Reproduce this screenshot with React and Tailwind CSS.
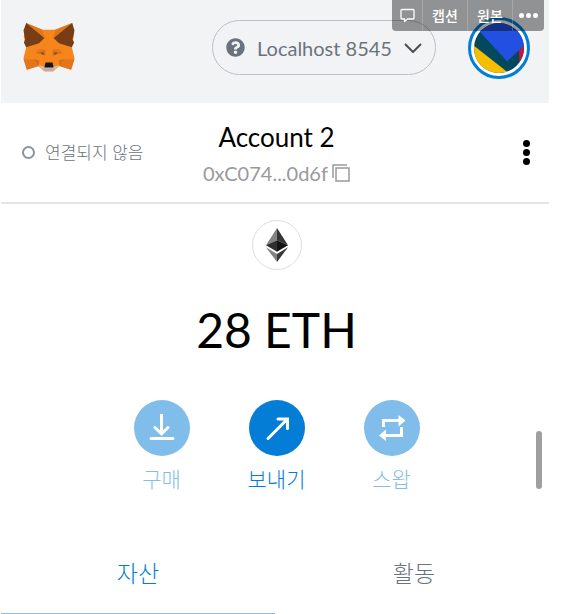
import { FaQuestionCircle } from "react-icons/fa";

function FoxLogo() {
  return (
    <svg className="h-[50px] w-[52px]" viewBox="71 67 153 148" role="img" aria-label="MetaMask">
      <path fill="#f6851b" d="M80 70 128 90H166L216 70 222 100 215 142 223 174 213 208 178 197 160 213H134L116 197 82 208 72 174 80 142 73 110Z" />
      <path fill="#e2761b" d="M80 70 128 90 134 112ZM216 70 166 90 161 112Z" />
      <path fill="#763d16" d="M80 70 134 114 118 130 80 142 73 128 77 119 72 92ZM216 70 161 114 177 130 215 142 222 128 217 119 223 92Z" />
      <path fill="#e2761b" d="M72 177H110L118 197 82 208ZM223 177H185L178 197 213 208Z" />
      <path fill="#d56a18" d="M104 177 119 181 116 196ZM191 177 176 181 179 196Z" />
      <path fill="#e4751f" d="M117 148H136L137 168 108 157ZM178 148H159L158 168 187 157Z" />
      <path fill="#d86c1a" d="M108 159 137 152 134 165ZM187 159 158 152 161 165Z" />
      <path fill="#5b4a3e" d="M123 157 131 158 133 164 126 162ZM172 157 164 158 162 164 169 162Z" />
      <path fill="#d7c1b3" d="M116 194 134 200H160L178 194 160 213H134Z" />
      <path fill="#c0ad9e" d="M128 204H167L160 213H134Z" />
      <path fill="#161616" d="M137 187H158L161 202H134Z" />
    </svg>
  );
}

function Jazzicon() {
  return (
    <svg className="size-[50px] rounded-full" viewBox="267 68 150 150" aria-hidden="true">
      <path fill="#03495e" d="M267 68H417V218H267Z" />
      <path fill="#2350e1" d="M260 68H417V136L366 183Z" />
      <path fill="#f5be00" d="M267 136 366 214V218H267Z" />
      <path fill="#c8143c" d="M402 150 417 136V190L403 184Z" />
    </svg>
  );
}

function EthLogo() {
  return (
    <svg className="h-[34px] w-[22px]" viewBox="0 0 66 102" role="img" aria-label="Ethereum">
      <path fill="#828384" d="M33 0V37L0 52Z" />
      <path fill="#343434" d="M33 0 66 52 33 37Z" />
      <path fill="#2f3030" d="M0 52 33 37V71Z" />
      <path fill="#141414" d="M66 52 33 37V71Z" />
      <path fill="#828384" d="M0 58 33 78V102Z" />
      <path fill="#393939" d="M66 58 33 78V102Z" />
    </svg>
  );
}

function DownIcon() {
  return (
    <svg className="size-7" viewBox="0 0 28 28" fill="none" stroke="currentColor" strokeWidth="3" strokeLinecap="round" aria-hidden="true">
      <path d="M13.5 1V19.500M7 13.500 13.5 20 20 13.500M3 24.500H25" />
    </svg>
  );
}

function SendIcon() {
  return (
    <svg className="size-7" viewBox="0 0 28 28" fill="none" stroke="currentColor" strokeWidth="3" strokeLinecap="round" aria-hidden="true">
      <path d="M5 24.500 23.500 6M15 5H24.500V14.500" />
    </svg>
  );
}

function SwapIcon() {
  return (
    <svg className="size-7" viewBox="0 0 28 28" fill="none" stroke="currentColor" strokeWidth="3" aria-hidden="true">
      <path d="M5.500 13V6.500H22M23.500 13V21.500H7" />
      <path d="M20.500 1 27.500 6.500 20.500 12.500ZM8 15.500 1 21.500 8 27Z" fill="currentColor" stroke="none" />
    </svg>
  );
}

function ViewerToolbar() {
  return (
    <div className="absolute top-0 right-[18px] flex h-[31px] divide-x divide-white/20 rounded-b-[4px] bg-black/40 text-[14px] font-medium text-white">
      <button type="button" aria-label="댓글" className="flex w-[31px] items-center justify-center">
        <svg className="size-[15px]" viewBox="0 0 15 15" fill="none" stroke="currentColor" strokeWidth="1.3" strokeLinejoin="round" aria-hidden="true">
          <path d="M2 1.500H13A1 1 0 0 1 14 2.500V10A1 1 0 0 1 13 11H7.500L4.500 13.500V11H2A1 1 0 0 1 1 10V2.500A1 1 0 0 1 2 1.500Z" />
        </svg>
      </button>
      <button type="button" className="w-[45px]">캡션</button>
      <button type="button" className="w-[45px]">원본</button>
      <button type="button" aria-label="더 보기" className="flex w-[31px] items-center justify-center gap-[2px]">
        <span className="size-[5px] rounded-full bg-white" />
        <span className="size-[5px] rounded-full bg-white" />
        <span className="size-[5px] rounded-full bg-white" />
      </button>
    </div>
  );
}

function Action({ label, icon, disabled }) {
  return (
    <button
      type="button"
      disabled={disabled}
      className="flex w-[60px] flex-col items-center gap-2 text-[21px] leading-[30px] font-light whitespace-nowrap text-[#037dd6] disabled:opacity-50"
    >
      <span className="flex size-14 items-center justify-center rounded-full bg-[#037dd6] text-white">{icon}</span>
      {label}
    </button>
  );
}

export default function App() {
  return (
    <div className="relative bg-white pr-[13px] pl-px font-['Lato','Noto_Sans_CJK_KR',sans-serif] text-black">
      <header className="flex h-[103px] items-start justify-between bg-[#f2f3f5] pr-[19px] pl-[22px]">
        <div className="pt-[22px]">
          <FoxLogo />
        </div>
        <div className="flex gap-8">
          <button type="button" className="mt-5 flex h-[55px] w-[224px] items-center justify-between rounded-full border border-[#bbc0c5] px-[13px] text-[20px] text-[#6a737d]">
            <FaQuestionCircle className="size-[19px]" aria-hidden="true" />
            <span>Localhost 8545</span>
            <svg className="h-[10px] w-[18px]" viewBox="0 0 18 10" fill="none" stroke="#4a4d51" strokeWidth="2" aria-hidden="true">
              <path d="M1 1 9 9 17 1" />
            </svg>
          </button>
          <button type="button" aria-label="Account menu" className="mt-[17px] flex size-[62px] items-center justify-center rounded-full border-3 border-[#037dd6] bg-white">
            <Jazzicon />
          </button>
        </div>
      </header>

      <section className="grid h-[101px] grid-cols-[1fr_auto_1fr] items-center border-b-2 border-[#e3e5e6] pr-[18px] pl-[21px]">
        <button type="button" className="flex items-center gap-[10px] text-[17px] font-light whitespace-nowrap text-[#6a737d]">
          <span className="size-[13px] rounded-full border-2 border-[#8b9299]" />
          연결되지 않음
        </button>
        <button type="button" className="flex flex-col items-center pt-1">
          <span className="text-[26px] leading-9">Account 2</span>
          <span className="flex items-center gap-1 text-[20px] leading-9 text-[#989a9b]">
            0xC074...0d6f
            <svg className="size-[18px]" viewBox="0 0 18 18" fill="none" stroke="currentColor" strokeWidth="1.500" aria-hidden="true">
              <path d="M1 14V1H15M4 4H17V17H4Z" />
            </svg>
          </span>
        </button>
        <button type="button" aria-label="Account options" className="flex flex-col items-center gap-[2px] justify-self-end px-px">
          <span className="size-[7px] rounded-full bg-black" />
          <span className="size-[7px] rounded-full bg-black" />
          <span className="size-[7px] rounded-full bg-black" />
        </button>
      </section>

      <main className="flex flex-col items-center pt-4 pl-[3px]">
        <div className="flex size-[50px] items-center justify-center rounded-full border border-[#dcdedf]">
          <EthLogo />
        </div>
        <p className="mt-[30px] text-[48px] leading-[60px]">28 ETH</p>
        <div className="mt-10 flex gap-[55px]">
          <Action label="구매" icon={<DownIcon />} disabled />
          <Action label="보내기" icon={<SendIcon />} />
          <Action label="스왑" icon={<SwapIcon />} disabled />
        </div>
      </main>

      <nav className="mt-[39px] grid h-[81px] grid-cols-2 text-[23px] font-light">
        <button type="button" className="border-b border-[#8abfe9] text-[#037dd6]">자산</button>
        <button type="button" className="border-b border-transparent pl-1 text-[#6a737d]">활동</button>
      </nav>

      <div className="absolute top-[431px] right-5 h-[58px] w-[6px] rounded-full bg-[#9f9f9f]" />
      <ViewerToolbar />
    </div>
  );
}
